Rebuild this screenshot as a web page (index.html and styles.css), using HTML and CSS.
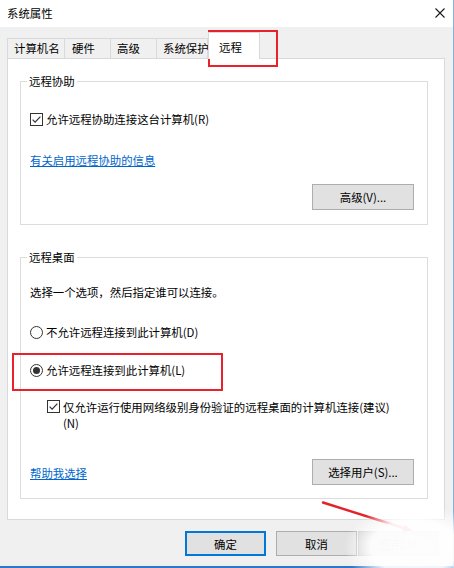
FILE: index.html
```html
<!DOCTYPE html>
<html lang="zh-CN">
<head>
<meta charset="utf-8">
<title>系统属性</title>
<link rel="stylesheet" href="styles.css">
</head>
<body>
<div class="window">
  <div class="titlebar">
    <span class="title">系统属性</span>
    <svg class="close" width="10" height="10" viewBox="0 0 10 10"><path d="M0.5 0.5 L9.5 9.5 M9.5 0.5 L0.5 9.5" stroke="#1a1a1a" stroke-width="1.1" fill="none"/></svg>
  </div>
  <div class="body">
    <div class="tabs">
      <div class="tab t1">计算机名</div>
      <div class="tab t2">硬件</div>
      <div class="tab t3">高级</div>
      <div class="tab t4">系统保护</div>
      <div class="tab t5 active">远程</div>
    </div>
    <div class="panel">
      <fieldset class="group g1">
        <legend>远程协助</legend>
        <div class="row chkrow r-assist">
          <svg class="chk" width="13" height="13" viewBox="0 0 13 13"><rect x="0.5" y="0.5" width="12" height="12" fill="#fff" stroke="#333"/><path d="M2.6 6.6 L5.1 9.1 L10.4 3.6" fill="none" stroke="#333" stroke-width="1.2"/></svg>
          <span>允许远程协助连接这台计算机(R)</span>
        </div>
        <div class="row r-link1"><a class="link">有关启用远程协助的信息</a></div>
        <div class="row btnrow r-adv"><button class="btn wide">高级(V)...</button></div>
      </fieldset>
      <fieldset class="group g2">
        <legend>远程桌面</legend>
        <div class="row r-desc">选择一个选项，然后指定谁可以连接。</div>
        <div class="row chkrow r-radio1"><span class="radio"></span><span>不允许远程连接到此计算机(D)</span></div>
        <div class="row chkrow r-radio2"><span class="radio on"></span><span>允许远程连接到此计算机(L)</span></div>
        <div class="row nla">
          <svg class="chk" width="13" height="13" viewBox="0 0 13 13"><rect x="0.5" y="0.5" width="12" height="12" fill="#fff" stroke="#333"/><path d="M2.6 6.6 L5.1 9.1 L10.4 3.6" fill="none" stroke="#333" stroke-width="1.2"/></svg>
          <span class="nla-text">仅允许运行使用网络级别身份验证的远程桌面的计算机连接(建议)<br>(N)</span>
        </div>
        <div class="row splitrow">
          <a class="link">帮助我选择</a>
          <button class="btn wide">选择用户(S)...</button>
        </div>
      </fieldset>
    </div>
    <div class="footer">
      <button class="btn dlg default">确定</button>
      <button class="btn dlg cancel">取消</button>
      <button class="btn dlg disabled">应用(A)</button>
    </div>
  </div>

  <div class="mark mark-tab"></div>
  <div class="mark mark-radio"></div>
  <svg class="arrow" width="100" height="45" viewBox="0 0 100 45"><path d="M5 7.5 L92 35" stroke="#e3222a" stroke-width="2.4" stroke-linecap="round" fill="none"/><path d="M94 36 L84 36.5 L87 29.5 Z" fill="#e3222a"/></svg>
  <div class="watermark"></div>
</div>
</body>
</html>
```

FILE: styles.css
```css
* { box-sizing: border-box; }
html, body { margin: 0; padding: 0; }
body {
  width: 454px;
  height: 568px;
  overflow: hidden;
  background: #f0f0f0;
  font-family: "Noto Sans CJK SC", "Noto Sans", sans-serif;
  font-size: 11.4px;
  color: #000;
}
.window {
  position: relative;
  width: 454px;
  height: 568px;
  display: flex;
  flex-direction: column;
  border-right: 1px solid #7fb2e6;
  border-bottom: 2px solid #2f78c8;
}
.titlebar {
  height: 27px;
  flex: none;
  background: #fff;
  display: flex;
  align-items: center;
  justify-content: space-between;
  padding: 0 8px 1px 7px;
  line-height: 16px;
}
.close { display: block; margin-bottom: 1px; }
.body {
  flex: 1;
  background: #f0f0f0;
  padding: 11px 8px 0 7px;
  display: flex;
  flex-direction: column;
}
.tabs {
  display: flex;
  align-items: flex-end;
  height: 20px;
  flex: none;
}
.tab {
  height: 20px;
  border: 1px solid #d9d9d9;
  border-bottom: none;
  border-right: none;
  background: #f0f0f0;
  line-height: 19px;
  padding-left: 6px;
  white-space: nowrap;
}
.t1 { width: 57px; }
.t2 { width: 46px; padding-left: 7px; }
.t3 { width: 46px; }
.t4 { width: 52px; padding-left: 6px; border-right: 1px solid #d9d9d9; }
.t5 { width: 52px; }
.tab.active {
  height: 27px;
  margin-bottom: -1px;
  background: #fff;
  border: 1px solid #d9d9d9;
  border-bottom: none;
  padding: 6px 0 0 10px;
  line-height: 16px;
  position: relative;
  z-index: 1;
}
.panel {
  width: 438px;
  height: 462px;
  flex: none;
  background: #fff;
  border: 1px solid #d9d9d9;
  padding: 14px 16px 0 12px;
}
.group {
  margin: 0;
  border: 1px solid #dcdcdc;
  padding: 0 13px 14px 9px;
  min-width: 0;
}
.group legend {
  padding: 0 2px;
  margin-left: -3px;
  line-height: 16px;
}
.g2 { margin-top: 24px; padding-bottom: 13px; }
.row { line-height: 16px; }
.chkrow { display: flex; align-items: center; height: 16px; }
.chk { display: block; flex: none; margin-right: 3px; }
.r-assist { margin-top: 22px; }
.r-link1 { margin-top: 25px; }
.link { color: #0066cc; text-decoration: underline; }
.btnrow { margin-top: 16px; display: flex; justify-content: flex-end; }
.btn {
  font-family: inherit;
  font-size: 11.4px;
  color: #000;
  background: #e1e1e1;
  border: 1px solid #adadad;
  padding: 0;
  margin: 0;
  line-height: 16px;
}
.btn.wide { width: 102px; height: 26px; }
.r-desc { margin-top: 19px; }
.r-radio1 { margin-top: 24px; }
.r-radio2 { margin-top: 22px; }
.radio {
  width: 13px;
  height: 13px;
  flex: none;
  border: 1px solid #333;
  border-radius: 50%;
  background: #fff;
  margin-right: 3px;
  display: flex;
  align-items: center;
  justify-content: center;
}
.radio.on::after {
  content: "";
  width: 7px;
  height: 7px;
  border-radius: 50%;
  background: #333;
}
.nla {
  margin-top: 21px;
  padding-left: 17px;
  display: flex;
  align-items: flex-start;
  line-height: 16px;
}
.nla .chk { margin-top: 1px; }
.nla-text { white-space: nowrap; }
.splitrow {
  margin-top: 28px;
  height: 26px;
  display: flex;
  align-items: center;
  justify-content: space-between;
}
.splitrow .link { margin-top: 2px; }
.footer {
  margin-top: 11px;
  display: flex;
  padding-left: 178px;
}
.btn.dlg { width: 81px; height: 25px; }
.btn.default { border: 2px solid #0078d7; margin-right: 10px; }
.btn.cancel { margin-right: 1px; }
.btn.disabled { background: #cccccc; border-color: #bfbfbf; color: #838383; }

.mark {
  position: absolute;
  border: 2.5px solid #e8212b;
  pointer-events: none;
}
.mark-tab { left: 208px; top: 30px; width: 70px; height: 37px; }
.mark-radio { left: 12px; top: 353px; width: 211px; height: 38px; }
.arrow { position: absolute; left: 318px; top: 495px; }
.watermark {
  position: absolute;
  left: 345px;
  top: 505px;
  width: 115px;
  height: 70px;
  background: radial-gradient(ellipse at 60% 60%, rgba(255,255,255,0.97) 0%, rgba(255,255,255,0.93) 45%, rgba(255,255,255,0) 72%);
  pointer-events: none;
}
```
